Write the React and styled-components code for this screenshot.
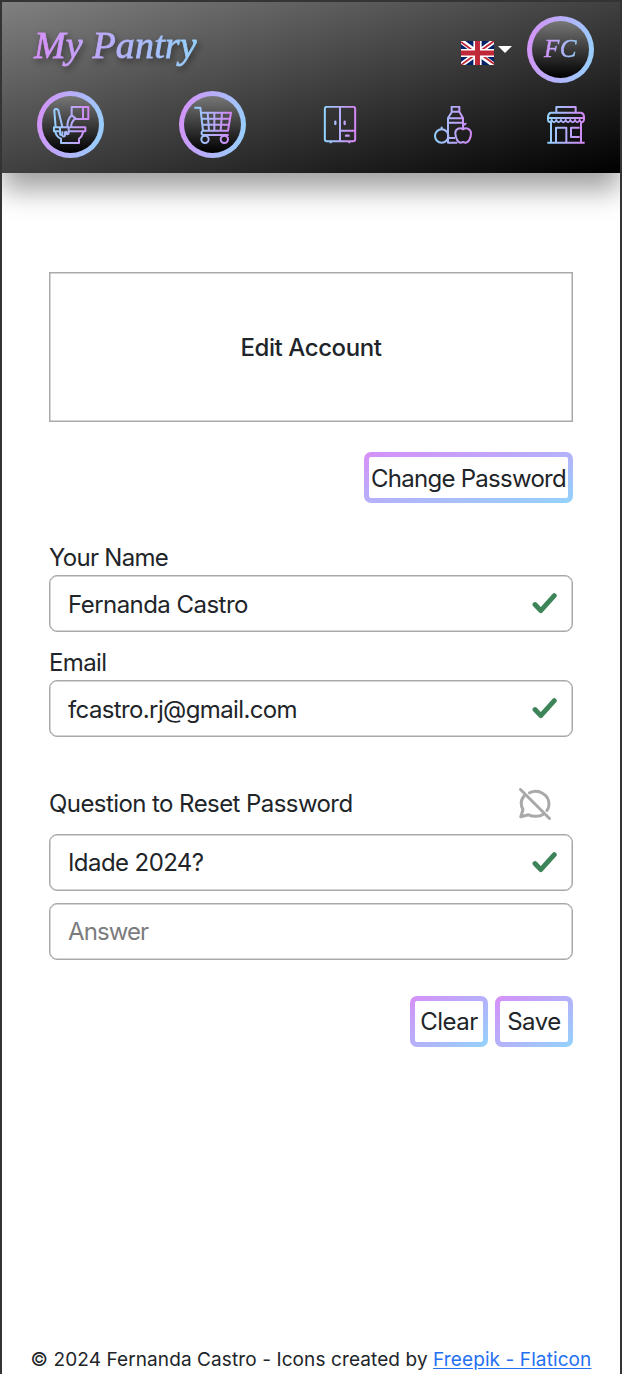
import React from "react";
import styled, { createGlobalStyle } from "styled-components";

const Global = createGlobalStyle`
  * { box-sizing: border-box; }
  body { margin: 0; background: #fff; }
`;

const Screen = styled.div`
  width: 622px;
  height: 1374px;
  overflow: hidden;
  display: flex;
  flex-direction: column;
  border: 2px solid #343436;
  border-bottom: 0;
  background: #fff;
  color: #212529;
  font-family: Inter, "Liberation Sans", sans-serif;
  font-size: 24px;
  line-height: 36px;
`;

const Header = styled.header`
  flex: none;
  height: 171px;
  background: linear-gradient(to bottom right, #808080, #000);
  box-shadow: 0 17px 26px rgba(0, 0, 0, 0.37);
`;

const TopRow = styled.div`
  display: flex;
  align-items: center;
  height: 89px;
  padding: 5px 26px 0 31px;
`;

const Brand = styled.h1`
  margin: 0 auto 8px 0;
  padding: 0 5px 0 1px;
  font: italic 400 38px/52px "Lucida Calligraphy", "Apple Chancery", "Liberation Serif", serif;
  letter-spacing: 0.15px;
  color: transparent;
  background: linear-gradient(to right, #d78ff7, #93d3fd);
  background-clip: text;
  -webkit-text-stroke: 0.8px transparent;
  filter: drop-shadow(2px 3px 3px rgba(0, 0, 0, 0.45));
`;

const Language = styled.div`
  display: flex;
  align-items: center;
  gap: 4px;
  margin: 7px 15px 0 0;
`;

const Caret = styled.span`
  border: 7px solid transparent;
  border-top: 7px solid #fff;
  border-bottom: 0;
  margin-top: -6px;
`;

const Ring = styled.div`
  flex: none;
  width: 67px;
  height: 67px;
  border-radius: 50%;
  border: 5px solid transparent;
  display: flex;
  align-items: center;
  justify-content: center;
  background: linear-gradient(#777, #000) padding-box,
    linear-gradient(100deg, #d78ff7, #93d3fd) border-box;
`;

const Initials = styled.span`
  padding: 0 2px;
  font: italic 400 25px/32px "Lucida Calligraphy", "Liberation Serif", serif;
  letter-spacing: 0.6px;
  color: transparent;
  background: linear-gradient(to right, #d78ff7, #93d3fd);
  background-clip: text;
  -webkit-text-stroke: 0.5px transparent;
`;

const Nav = styled.nav`
  display: flex;
  align-items: center;
  justify-content: space-between;
  height: 67px;
  padding: 0 35.2px;
`;

const Glyph = styled.svg`
  display: block;
  flex: none;
  width: 38px;
  height: 38px;
  fill: none;
  stroke: url(#${(p) => p.$paint});
  stroke-width: 6;
  stroke-linejoin: round;
`;

const Main = styled.main`
  flex: 1;
  display: flex;
  flex-direction: column;
  padding: 99px 47px 0 47px;
`;

const TitleBox = styled.h2`
  margin: 0 0 30px;
  height: 150px;
  padding-top: 2px;
  display: flex;
  align-items: center;
  justify-content: center;
  border: 1px solid #a9a9a9;
  box-shadow: inset 0 0 0 0.5px #a9a9a9;
  font-size: 24px;
  font-weight: 500;
  letter-spacing: -0.42px;
`;

const Actions = styled.div`
  display: flex;
  justify-content: flex-end;
  gap: 7px;
  margin-top: ${(p) => p.$top || 0}px;
`;

const Button = styled.button`
  width: ${(p) => p.$width}px;
  height: 51px;
  padding: ${(p) => p.$nudge || 0}px 0 0;
  border: 5px solid transparent;
  border-radius: 7px;
  background: linear-gradient(#fff, #fff) padding-box,
    linear-gradient(to bottom right, #d78ff7, #93d3fd) border-box;
  color: #212529;
  font: inherit;
  letter-spacing: ${(p) => p.$spacing || "-0.5px"};
  white-space: nowrap;
`;

const Label = styled.label`
  display: flex;
  align-items: center;
  justify-content: space-between;
  height: 36px;
  margin-top: ${(p) => p.$top}px;
  padding: ${(p) => p.$nudge || 0}px 22px 0 0;
  letter-spacing: ${(p) => p.$spacing || "-0.57px"};
`;

const Field = styled.div`
  display: flex;
  align-items: center;
  justify-content: space-between;
  height: 57px;
  margin-top: ${(p) => p.$top || 0}px;
  padding: 0 15px 0 18px;
  border: 1px solid #a9a9a9;
  box-shadow: inset 0 0 0 0.5px #a9a9a9;
  border-radius: 8px;
  color: ${(p) => (p.$empty ? "#7b7c7e" : "#212529")};
  letter-spacing: ${(p) => p.$spacing || "-0.54px"};
  span { padding-top: ${(p) => p.$nudge || 0}px; }
`;

const Footer = styled.footer`
  flex: none;
  height: 33px;
  text-align: center;
  white-space: nowrap;
  font-size: 19px;
  line-height: 38px;
  letter-spacing: 0.1px;
  a { color: #2470f3; text-underline-offset: 2px; }
`;

const Check = () => (
  <svg width="25" height="21" viewBox="0 0 25 21" fill="none" stroke="#3d8559" strokeWidth="4.9" strokeLinecap="round" strokeLinejoin="round">
    <path d="M3 11.500 8.800 17.700 22.300 2.700" />
  </svg>
);

const Flag = () => (
  <svg width="33" height="24" viewBox="0 0 32 24" preserveAspectRatio="none">
    <path fill="#012169" d="M0 0h32v24H0z" />
    <path stroke="#fff" strokeWidth="5" d="m0 0 32 24M32 0 0 24" />
    <path stroke="#c0283a" strokeWidth="1.8" d="m0 1 14 10.5M32 0 18 10.5M0 24l14-10.5M32 23 18 12.5" />
    <path stroke="#fff" strokeWidth="8" d="M16 0v24M0 12h32" />
    <path stroke="#c0283a" strokeWidth="4.8" d="M16 0v24M0 12h32" />
  </svg>
);

const Paint = ({ id, x1, x2 }) => (
  <linearGradient id={id} gradientUnits="userSpaceOnUse" x1={x1} x2={x2} y1="0" y2="0">
    <stop stopColor="#93d3fd" />
    <stop offset="1" stopColor="#d585f5" />
  </linearGradient>
);

const Bowl = () => (
  <Glyph viewBox="96 75 114 114" $paint="bowl">
    <Paint id="bowl" x1="99" x2="207" />
    <path d="M102 139H196V151H190C187 164 184 169 177 173V186H123V173C111 168 107 160 106 151H102ZM106 151H122M147 151H191M107 139 103 90C102 82 113 82 115 88L127 137M120 139V158C120 163 127 163 127 158V151M127 158V162C127 168 135 168 135 162V155C135 151 140 151 140 155V157C140 162 146 160 146 156V139" />
    <path d="M155 78H205V114H166V111L155 103ZM189 78V114M155 103C146 111 142 122 142 137M166 111C159 118 154 127 153 137" />
  </Glyph>
);

const Cart = () => (
  <Glyph viewBox="524 75 114 114" $paint="cart">
    <Paint id="cart" x1="524" x2="637" />
    <path d="M525 80H543L551 149H626L635 95H545M547 113H631M549 131H628M565 95 569 149M585 95V149M608 95 604 149M551 149C545 151 545 162 552 162H628" />
    <circle cx="557" cy="175" r="11" /><circle cx="615" cy="175" r="11" />
  </Glyph>
);

const Cabinet = () => (
  <Glyph viewBox="66 78 114 114" $paint="cabinet">
    <Paint id="cabinet" x1="76" x2="171" />
    <rect x="77.5" y="80.5" width="91" height="103" rx="6" />
    <path d="M123 81V183M123 152H168M95 184V190M151 184V190" />
    <path d="M109 125V132M137 125V132M141 167H149" strokeWidth="7" strokeLinecap="round" />
  </Glyph>
);

const Groceries = () => (
  <Glyph viewBox="404 78 114 114" $paint="groceries">
    <Paint id="groceries" x1="404" x2="517" />
    <path d="M457 80H480V95H457ZM458 95 446 114V188H474M480 95 491 114V143M446 115H491M446 128H491M447 174H467" />
    <circle cx="427" cy="168" r="20" /><path d="M427 148V140" />
    <path d="M491 148C481 141 467 147 468 160C469 174 475 188 484 188L491 186L498 188C508 188 515 174 515 160C515 147 501 141 491 148ZM491 148V136M494 136C496 132 499 131 501 132" />
  </Glyph>
);

const Store = () => (
  <Glyph viewBox="741 78 114 114" $paint="store">
    <Paint id="store" x1="742" x2="854" />
    <path d="M769 97V81H827V97M753 98H843C849 99 852 104 852 111V119C850 129 842 129 839 120C836 129 828 129 825 120C822 129 814 129 811 120C808 129 800 129 797 120C794 129 786 129 783 120C780 129 772 129 769 120C766 129 758 129 755 120C752 129 744 127 744 119V111C744 104 747 99 753 98ZM744 114H852M753 126V186M843 126V186M742 188H854M768 187V143H799V187M839 143H813V171H839" />
  </Glyph>
);

const MutedComment = () => (
  <svg width="32" height="32" viewBox="0 0 32 32" fill="none" stroke="#a9a9a9" strokeWidth="3" strokeLinecap="round" strokeLinejoin="round">
    <path d="M1.5 1.5 30.5 30.5M10.5 4.8C20 .5 30 7 30 16C30 18.500 29.200 20.500 28 22.500M5.500 7.500C1.500 12 1.500 17 4 21.500L1.800 28.800L9.500 26.800C14 29 20.500 28.700 24 26.500" />
  </svg>
);

export default function App() {
  return (
    <Screen>
      <Global />
      <Header>
        <TopRow>
          <Brand>My Pantry</Brand>
          <Language><Flag /><Caret /></Language>
          <Ring><Initials>FC</Initials></Ring>
        </TopRow>
        <Nav>
          <Ring><Bowl /></Ring>
          <Ring><Cart /></Ring>
          <Cabinet />
          <Groceries />
          <Store />
        </Nav>
      </Header>
      <Main>
        <TitleBox>Edit Account</TitleBox>
        <Actions><Button $width={209} $nudge={2} $spacing="-0.73px">Change Password</Button></Actions>
        <Label $top={36} $nudge={2} $spacing="-0.7px">Your Name</Label>
        <Field $nudge={2}><span>Fernanda Castro</span><Check /></Field>
        <Label $top={12} $nudge={2} $spacing="-0.65px">Email</Label>
        <Field $nudge={2} $spacing="-0.62px"><span>fcastro.rj@gmail.com</span><Check /></Field>
        <Label $top={49}>Question to Reset Password<MutedComment /></Label>
        <Field $top={12} $spacing="-0.58px"><span>Idade 2024?</span><Check /></Field>
        <Field $top={12} $empty $spacing="-0.9px"><span>Answer</span></Field>
        <Actions $top={36}><Button $width={78}>Clear</Button><Button $width={78}>Save</Button></Actions>
      </Main>
      <Footer>© 2024 Fernanda Castro - Icons created by <a href="#">Freepik - Flaticon</a></Footer>
    </Screen>
  );
}
